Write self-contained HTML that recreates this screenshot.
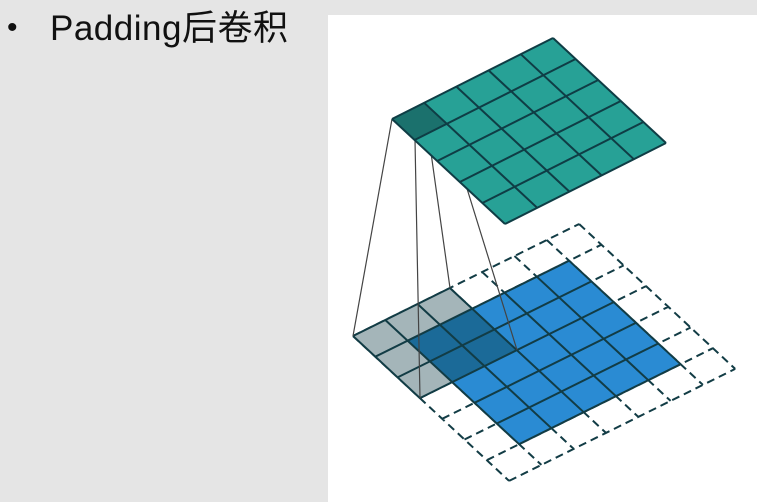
<!DOCTYPE html>
<html><head><meta charset="utf-8"><style>
html,body{margin:0;padding:0;}
body{width:757px;height:502px;overflow:hidden;position:relative;background:#e5e5e5;font-family:"Liberation Sans","Noto Sans CJK SC",sans-serif;}
.panel{position:absolute;left:328px;top:15px;width:429px;height:487px;background:#fff;}
.t{position:absolute;left:50px;top:0px;font-size:35px;letter-spacing:0.5px;color:#111;white-space:nowrap;}
.b{position:absolute;left:7px;top:11px;font-size:30px;color:#111;}
svg{position:absolute;left:0;top:0;}
</style></head><body>
<div class="panel"></div>
<div class="b">•</div>
<div class="t">Padding后卷积</div>
<svg width="757" height="502" viewBox="0 0 757 502">
<g transform="matrix(32.3 -16 22.3 20.7 353 336)" stroke="#123c45" fill="none">
  <g stroke-dasharray="8 5" stroke-width="2" vector-effect="non-scaling-stroke">
    <path vector-effect="non-scaling-stroke" d="M0 0V7M1 0V7M2 0V7M3 0V7M4 0V7M5 0V7M6 0V7M7 0V7M0 0H7M0 1H7M0 2H7M0 3H7M0 4H7M0 5H7M0 6H7M0 7H7"/>
  </g>
  <rect x="0" y="0" width="3" height="3" fill="#a4b5b9" stroke="none"/>
  <rect x="1" y="1" width="5" height="5" fill="#2a8bd3" stroke="none"/>
  <rect x="1" y="1" width="2" height="2" fill="#1b6a98" stroke="none"/>
  <path vector-effect="non-scaling-stroke" stroke-width="2" d="M1 1V6M2 1V6M3 1V6M4 1V6M5 1V6M6 1V6M1 1H6M1 2H6M1 3H6M1 4H6M1 5H6M1 6H6M0 0V3M0 0H3M0 1H3M0 2H3M0 3H3M1 0V3M2 0V3M3 0V3"/>
</g>
<g stroke="#444" stroke-width="1.2" fill="none">
  <path d="M392 119L353 336M415 140L420 398M424 103L450 288M447 124L517 350"/>
</g>
<g transform="matrix(32.2 -16.2 22.6 21 392 119)" stroke="#0f3d45" fill="none">
  <rect x="0" y="0" width="5" height="5" fill="#27a196" stroke="none"/>
  <rect x="0" y="0" width="1" height="1" fill="#1b716d" stroke="none"/>
  <path vector-effect="non-scaling-stroke" stroke-width="2" d="M0 0V5M1 0V5M2 0V5M3 0V5M4 0V5M5 0V5M0 0H5M0 1H5M0 2H5M0 3H5M0 4H5M0 5H5"/>
</g>
</svg>
</body></html>
